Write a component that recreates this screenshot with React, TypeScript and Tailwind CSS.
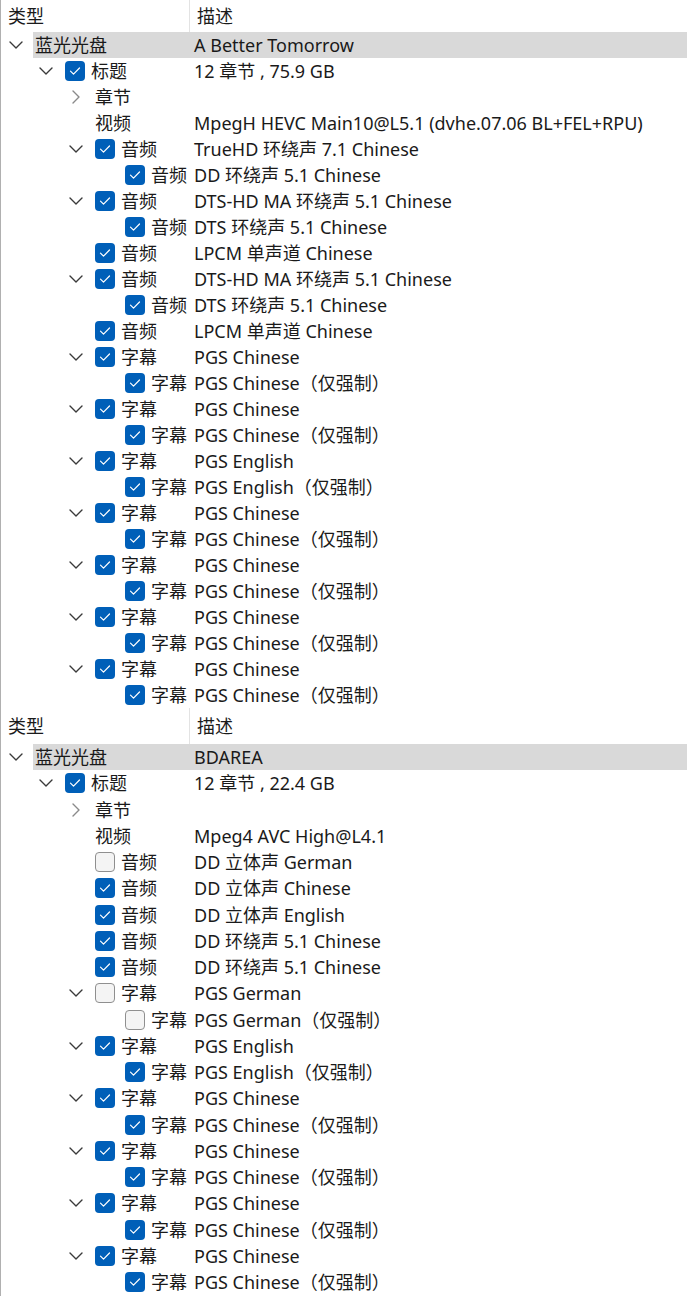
type Row = {
  level: 0 | 1 | 2 | 3;
  chevron?: "down" | "right";
  checked?: boolean;
  label: string;
  desc: string;
  highlight?: boolean;
};

const indentW = ["w-[32px]", "w-[62px]", "w-[92px]", "w-[122px]"];
const labelW = ["w-[156px]", "w-[126px]", "w-[96px]", "w-[66px]"];

const pair = (lang: string): Row[] => [
  { level: 2, chevron: "down", checked: true, label: "字幕", desc: `PGS ${lang}` },
  { level: 3, checked: true, label: "字幕", desc: `PGS ${lang}（仅强制）` },
];

const firstRows: Row[] = [
  { level: 0, chevron: "down", label: "蓝光光盘", desc: "A Better Tomorrow", highlight: true },
  { level: 1, chevron: "down", checked: true, label: "标题", desc: "12 章节 , 75.9 GB" },
  { level: 2, chevron: "right", label: "章节", desc: "" },
  { level: 2, label: "视频", desc: "MpegH HEVC Main10@L5.1 (dvhe.07.06 BL+FEL+RPU)" },
  { level: 2, chevron: "down", checked: true, label: "音频", desc: "TrueHD 环绕声 7.1 Chinese" },
  { level: 3, checked: true, label: "音频", desc: "DD 环绕声 5.1 Chinese" },
  { level: 2, chevron: "down", checked: true, label: "音频", desc: "DTS-HD MA 环绕声 5.1 Chinese" },
  { level: 3, checked: true, label: "音频", desc: "DTS 环绕声 5.1 Chinese" },
  { level: 2, checked: true, label: "音频", desc: "LPCM 单声道 Chinese" },
  { level: 2, chevron: "down", checked: true, label: "音频", desc: "DTS-HD MA 环绕声 5.1 Chinese" },
  { level: 3, checked: true, label: "音频", desc: "DTS 环绕声 5.1 Chinese" },
  { level: 2, checked: true, label: "音频", desc: "LPCM 单声道 Chinese" },
  ...pair("Chinese"),
  ...pair("Chinese"),
  ...pair("English"),
  ...pair("Chinese"),
  ...pair("Chinese"),
  ...pair("Chinese"),
  ...pair("Chinese"),
];

const secondRows: Row[] = [
  { level: 0, chevron: "down", label: "蓝光光盘", desc: "BDAREA", highlight: true },
  { level: 1, chevron: "down", checked: true, label: "标题", desc: "12 章节 , 22.4 GB" },
  { level: 2, chevron: "right", label: "章节", desc: "" },
  { level: 2, label: "视频", desc: "Mpeg4 AVC High@L4.1" },
  { level: 2, checked: false, label: "音频", desc: "DD 立体声 German" },
  { level: 2, checked: true, label: "音频", desc: "DD 立体声 Chinese" },
  { level: 2, checked: true, label: "音频", desc: "DD 立体声 English" },
  { level: 2, checked: true, label: "音频", desc: "DD 环绕声 5.1 Chinese" },
  { level: 2, checked: true, label: "音频", desc: "DD 环绕声 5.1 Chinese" },
  { level: 2, chevron: "down", checked: false, label: "字幕", desc: "PGS German" },
  { level: 3, checked: false, label: "字幕", desc: "PGS German（仅强制）" },
  ...pair("English"),
  ...pair("Chinese"),
  ...pair("Chinese"),
  ...pair("Chinese"),
  ...pair("Chinese"),
];

function Chevron({ dir }: { dir: "down" | "right" }) {
  if (dir === "down") {
    return (
      <svg width="14" height="8" viewBox="0 0 14 8" fill="none">
        <path d="M1 1l6 6 6-6" stroke="#3a3a3a" strokeWidth="1.4" strokeLinecap="round" strokeLinejoin="round" />
      </svg>
    );
  }
  return (
    <svg width="8" height="14" viewBox="0 0 8 14" fill="none">
      <path d="M1 1l6 6-6 6" stroke="#8a8a8a" strokeWidth="1.4" strokeLinecap="round" strokeLinejoin="round" />
    </svg>
  );
}

function Checkbox({ checked }: { checked: boolean }) {
  if (!checked) {
    return <div className="w-[20px] h-[20px] rounded-[4px] border border-[#8f8f8f] bg-[#f4f4f4] shrink-0" />;
  }
  return (
    <div className="w-[20px] h-[20px] rounded-[4px] bg-[#005fb8] flex items-center justify-center shrink-0">
      <svg width="12" height="10" viewBox="0 0 12 10" fill="none">
        <path d="M1.5 5.2l3 3L10.5 2" stroke="white" strokeWidth="1.2" strokeLinecap="round" strokeLinejoin="round" />
      </svg>
    </div>
  );
}

function TreeRow({ row, tall }: { row: Row; tall: boolean }) {
  return (
    <div className={`flex ${tall ? "h-[26.25px]" : "h-[26px]"}`}>
      <div className={`${indentW[row.level]} shrink-0 flex justify-end`}>
        <div className="w-[32px] flex items-center justify-center pr-[3px]">
          {row.chevron && <Chevron dir={row.chevron} />}
        </div>
      </div>
      <div className={`flex-1 flex items-center ${row.highlight ? "bg-[#d9d9d9]" : ""}`}>
        <div className={`${labelW[row.level]} shrink-0 flex items-center pl-[2px] whitespace-nowrap`}>
          {row.checked !== undefined && (
            <div className="mr-[6px]">
              <Checkbox checked={row.checked} />
            </div>
          )}
          <span>{row.label}</span>
        </div>
        <div className="pl-[5px] whitespace-nowrap">{row.desc}</div>
      </div>
    </div>
  );
}

function Panel({ rows, tall }: { rows: Row[]; tall: boolean }) {
  return (
    <div>
      <div className={`flex ${tall ? "h-[36px]" : "h-[32px]"}`}>
        <div className="w-[188px] shrink-0 pl-[7px] flex items-center">类型</div>
        <div className="flex-1 border-l border-[#e3e3e3] pl-[7px] flex items-center">描述</div>
      </div>
      {rows.map((r, i) => (
        <TreeRow key={i} row={r} tall={tall} />
      ))}
    </div>
  );
}

export default function App() {
  return (
    <div className="w-[687px] h-[1296px] overflow-hidden bg-white text-[#1a1a1a] text-[18px] leading-none font-['Segoe_UI','Noto_Sans','Noto_Sans_CJK_SC',sans-serif] border-l border-[#b0b0b0]">
      <Panel rows={firstRows} tall={false} />
      <Panel rows={secondRows} tall={true} />
    </div>
  );
}
